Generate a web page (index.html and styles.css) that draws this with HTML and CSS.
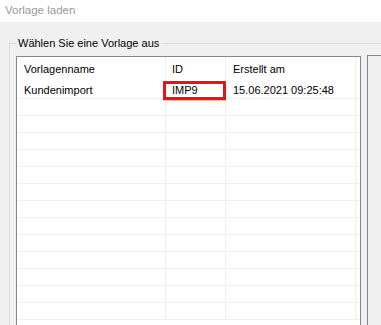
FILE: index.html
```html
<!DOCTYPE html>
<html>
	<head>
		<title>Vorlage laden</title>
		<link rel="stylesheet" href="styles.css">
	</head>
	<body>
		<div class="titlebar">Vorlage laden</div>

		<fieldset class="group">
			<legend>Wählen Sie eine Vorlage aus</legend>
			<div class="group-body">
				<div class="listview">
					<div class="lv-row lv-head">
						<div class="cell c-name">Vorlagenname</div>
						<div class="cell c-id">ID</div>
						<div class="cell c-date">Erstellt am</div>
					</div>
					<div class="lv-row">
						<div class="cell c-name">Kundenimport</div>
						<div class="cell c-id marked">IMP9</div>
						<div class="cell c-date">15.06.2021 09:25:48</div>
					</div>
					<div class="lv-row"><div class="cell c-name"></div><div class="cell c-id"></div><div class="cell c-date"></div></div>
					<div class="lv-row"><div class="cell c-name"></div><div class="cell c-id"></div><div class="cell c-date"></div></div>
					<div class="lv-row"><div class="cell c-name"></div><div class="cell c-id"></div><div class="cell c-date"></div></div>
					<div class="lv-row"><div class="cell c-name"></div><div class="cell c-id"></div><div class="cell c-date"></div></div>
					<div class="lv-row"><div class="cell c-name"></div><div class="cell c-id"></div><div class="cell c-date"></div></div>
					<div class="lv-row"><div class="cell c-name"></div><div class="cell c-id"></div><div class="cell c-date"></div></div>
					<div class="lv-row"><div class="cell c-name"></div><div class="cell c-id"></div><div class="cell c-date"></div></div>
					<div class="lv-row"><div class="cell c-name"></div><div class="cell c-id"></div><div class="cell c-date"></div></div>
					<div class="lv-row"><div class="cell c-name"></div><div class="cell c-id"></div><div class="cell c-date"></div></div>
					<div class="lv-row"><div class="cell c-name"></div><div class="cell c-id"></div><div class="cell c-date"></div></div>
					<div class="lv-row"><div class="cell c-name"></div><div class="cell c-id"></div><div class="cell c-date"></div></div>
					<div class="lv-row"><div class="cell c-name"></div><div class="cell c-id"></div><div class="cell c-date"></div></div>
					<div class="lv-row"><div class="cell c-name"></div><div class="cell c-id"></div><div class="cell c-date"></div></div>
				</div>
				<div class="sidepanel"></div>
			</div>
		</fieldset>
	</body>
</html>
```

FILE: styles.css
```css
body {
	margin: 0;
	height: 325px;
	overflow: hidden;
	background-color: #f0f0f0;
	font-family: "Liberation Sans", Arial, sans-serif;
	font-size: 11px;
	color: #000;
}
.titlebar {
	height: 22px;
	line-height: 20px;
	padding-left: 5px;
	background-color: #fff;
	color: #999;
	font-size: 11.5px;
}
.group {
	margin: 15px 0 0 9px;
	padding: 0 0 0 6px;
	border: 1px solid #dcdcdc;
	border-right: none;
	border-bottom: none;
	min-width: 0;
	height: 300px;
	overflow: hidden;
}
.group legend {
	padding: 0 2px;
	margin-left: 0;
	line-height: 13px;
	font-size: 11px;
}
.group-body {
	display: flex;
	align-items: flex-start;
	gap: 6px;
	margin-top: 5px;
}
.listview {
	flex: none;
	width: 343px;
	height: 290px;
	margin-top: 1px;
	background-color: #fff;
	border: 1px solid #828790;
	border-bottom: none;
	overflow: hidden;
}
.lv-row {
	display: flex;
	height: 16px;
	line-height: 17px;
	border-bottom: 1px solid #f0f0f0;
}
.lv-head {
	height: 25px;
	line-height: 25px;
	border-bottom: none;
}
.cell {
	flex: none;
	padding-left: 7px;
	border-right: 1px solid #f0f0f0;
	box-sizing: border-box;
	white-space: nowrap;
}
.c-name {
	width: 149px;
}
.c-id {
	width: 60px;
	padding-left: 6px;
}
.c-date {
	width: 130px;
}
.marked {
	position: relative;
}
.marked::after {
	content: "";
	position: absolute;
	left: -3px;
	right: -1px;
	top: -1px;
	bottom: -2px;
	border: 3px solid #ee1111;
	box-shadow: 0 1px 0 #fbb;
}
.sidepanel {
	flex: 1;
	height: 290px;
	border-top: 1px solid #828790;
	border-left: 1px solid #828790;
	background-color: #f0f0f0;
}
```
